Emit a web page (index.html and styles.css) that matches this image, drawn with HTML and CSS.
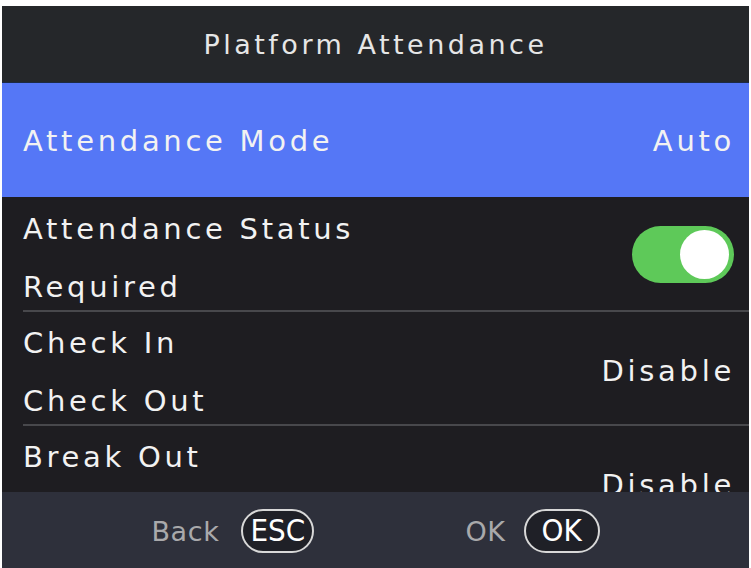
FILE: index.html
```html
<!DOCTYPE html>
<html>
<head>
<meta charset="utf-8">
<link rel="stylesheet" href="styles.css">
</head>
<body>
<div class="screen">
  <header class="title">Platform Attendance</header>
  <div class="list">
    <div class="row selected">
      <div class="labels"><span>Attendance Mode</span></div>
      <div class="value">Auto</div>
    </div>
    <div class="row">
      <div class="labels"><span>Attendance Status</span><span>Required</span></div>
      <div class="switch"><span class="toggle"><span class="knob"></span></span></div>
    </div>
    <div class="row">
      <div class="labels"><span>Check In</span><span>Check Out</span></div>
      <div class="value">Disable</div>
    </div>
    <div class="row">
      <div class="labels"><span>Break Out</span><span class="spacer"></span></div>
      <div class="value">Disable</div>
    </div>
  </div>
  <footer class="footer">
    <div class="action back"><span class="act-label">Back</span><span class="key">ESC</span></div>
    <div class="action ok"><span class="act-label">OK</span><span class="key">OK</span></div>
  </footer>
</div>
</body>
</html>
```

FILE: styles.css
```css
html, body {
  margin: 0;
  padding: 0;
  background: #ffffff;
}
body {
  padding: 6px 2px 0 2px;
  font-family: "DejaVu Sans", "Noto Sans", sans-serif;
}
.screen {
  width: 747px;
  height: 562px;
  background: #1e1d21;
  display: flex;
  flex-direction: column;
  overflow: hidden;
}
.title {
  height: 77px;
  flex: none;
  background: #25272a;
  color: #e6e6e6;
  font-size: 27px;
  letter-spacing: 3.5px;
  display: flex;
  align-items: center;
  justify-content: center;
  border-bottom: 1px solid #1c2a45;
  box-sizing: border-box;
}
.list {
  flex: 1;
  overflow: hidden;
}
.row {
  height: 114px;
  box-sizing: border-box;
  display: flex;
  align-items: center;
  justify-content: space-between;
  padding: 0 18px 0 21px;
  color: #f2f2f2;
  font-size: 29px;
  letter-spacing: 3.7px;
  position: relative;
}
.row + .row::before {
  content: "";
  position: absolute;
  left: 21px;
  right: 0;
  top: -1px;
  height: 2px;
  background: #48484c;
}
.row.selected {
  background: #5577f6;
}
.row.selected + .row::before {
  display: none;
}
.labels {
  display: flex;
  flex-direction: column;
  line-height: 58px;
  padding-top: 7px;
}
.spacer {
  height: 58px;
}
.value {
  line-height: 58px;
  padding-top: 5px;
  margin-right: -4px;
}
.selected .labels,
.selected .value {
  padding-top: 2px;
}
.toggle {
  display: block;
  width: 102px;
  height: 57px;
  border-radius: 29px;
  background: #5ec959;
  position: relative;
  margin-right: -3px;
}
.knob {
  position: absolute;
  right: 5px;
  top: 4px;
  width: 49px;
  height: 49px;
  border-radius: 50%;
  background: #ffffff;
}
.footer {
  height: 76px;
  flex: none;
  background: #2e303b;
  display: flex;
  align-items: center;
  justify-content: center;
  gap: 151px;
  padding-top: 2px;
  box-sizing: border-box;
}
.action {
  display: flex;
  align-items: center;
}
.back { gap: 22px; }
.ok { gap: 18px; }
.act-label {
  color: #a9a9ab;
  font-family: "DejaVu Sans", sans-serif;
  font-size: 27px;
  letter-spacing: 0.6px;
}
.key {
  display: flex;
  align-items: center;
  justify-content: center;
  height: 44px;
  min-width: 73px;
  box-sizing: border-box;
  padding: 0 5px 2px;
  border: 2px solid #d8d8d8;
  border-radius: 22px;
  color: #ffffff;
  font-family: "DejaVu Sans Condensed", "DejaVu Sans", sans-serif;
  font-size: 31px;
  background: #1f2027;
}
.ok .key {
  min-width: 76px;
}
```
